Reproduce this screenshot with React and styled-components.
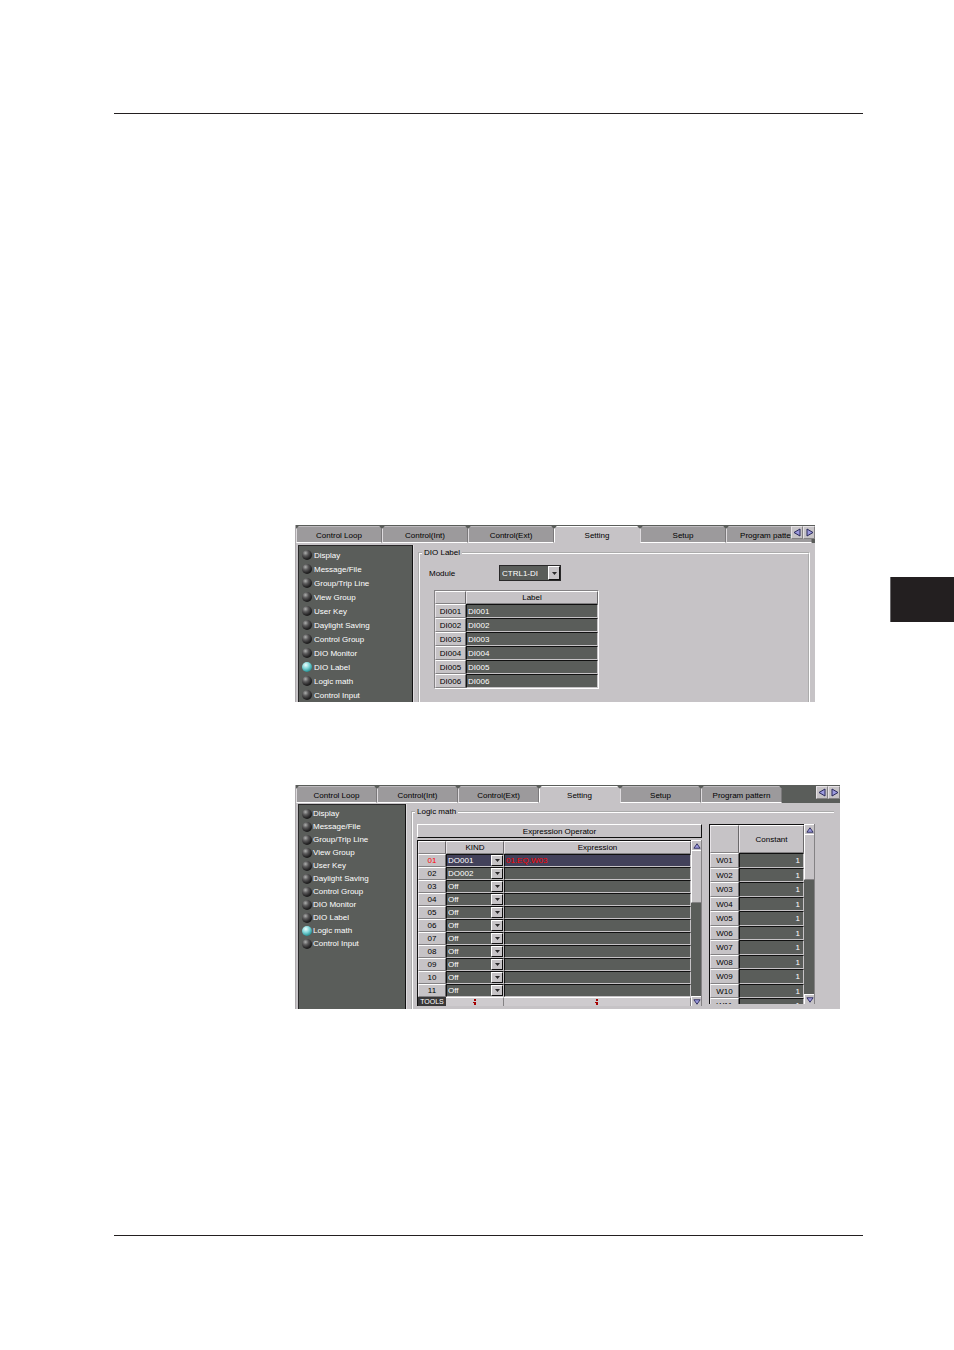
import { useState } from 'react';
import styled, { createGlobalStyle, css } from 'styled-components';

const GlobalStyle = createGlobalStyle`
  :root {
    --color-face: #c6c3c6;
    --color-panel: #5a5d5a;
    --color-tab: #9c9a9c;
    --color-shadow: #848284;
    --color-ink: #231f20;
    --color-selected: #42415a;
    --color-arrow: #9c9ade;
  }

  *,
  *::before,
  *::after {
    box-sizing: border-box;
  }

  body {
    margin: 0;
    background: #fff;
  }

  body,
  button,
  input,
  select {
    font-family: 'Liberation Sans', Arial, sans-serif;
    font-size: 8px;
    line-height: 11px;
  }

  button,
  input,
  select {
    margin: 0;
    padding: 0;
    border: 0;
    border-radius: 0;
    color: inherit;
    background: none;
    appearance: none;
    outline: none;
  }
`;

const Page = styled.div`
  display: flex;
  min-height: 1350px;
`;

const Sheet = styled.main`
  flex: 1;
  min-width: 0;
  display: flex;
  flex-direction: column;
  padding: 113px 0 114px 114px;
`;

const Rule = styled.hr`
  width: 100%;
  height: 1px;
  margin: 0;
  border: 0;
  background: var(--color-ink);
`;

const Figures = styled.div`
  flex: 1;
  display: flex;
  flex-direction: column;
  gap: 83px;
  padding: 411px 23px 0 181px;
`;

const Margin = styled.aside`
  width: 91px;
  padding: 577px 0 0 27px;
`;

const ChapterMark = styled.div`
  height: 45px;
  background: var(--color-ink);
  border-left: 1px solid #6b696b;
`;

const Window = styled.section`
  margin-right: ${(props) => props.$inset || 0}px;
  background: var(--color-face);
  border-left: 1px solid #adaaad;
  overflow: hidden;
`;

const TabStrip = styled.div`
  position: relative;
  display: flex;
  height: 18px;
  padding-top: 1px;
  background: var(--color-panel);
  overflow: hidden;
`;

const Tab = styled.button`
  flex: 0 0 ${(props) => props.$width}px;
  height: 17px;
  padding-top: 1px;
  color: #000;
  background: var(--color-tab);
  border-top: 1px solid #bdbabd;
  border-left: 1px solid #dedbde;
  border-right: 1px solid #7b797b;
  border-bottom: 1px solid #fff;
  clip-path: polygon(3px 0, calc(100% - 3px) 0, 100% 3px, 100% 100%, 0 100%, 0 3px);
  white-space: nowrap;

  ${(props) =>
    props.$active &&
    css`
      background: var(--color-face);
      border-top-color: #fff;
      border-left-color: #fff;
      border-right-color: var(--color-face);
      border-bottom-color: var(--color-face);
    `}
`;

const TabScroll = styled.div`
  position: absolute;
  top: 1px;
  right: 0;
  display: flex;
`;

const TabScrollButton = styled.button`
  display: grid;
  place-items: center;
  width: 12px;
  height: 13px;
  background: var(--color-face);
  border: 1px solid #e7e3e7;
  border-right-color: var(--color-shadow);
  border-bottom-color: var(--color-shadow);
`;

const Body = styled.div`
  display: flex;
  padding-top: ${(props) => props.$top}px;
`;

const Nav = styled.div`
  flex: 0 0 ${(props) => props.$width}px;
  margin: 0 5px 0 2px;
  padding: 2px 0 0 3px;
  color: #fff;
  background: var(--color-panel);
  border-top: 1px solid #292829;
  border-left: 1px solid #292829;
  border-right: 1px solid #101010;
  box-shadow: 1px 0 0 #dedbde;
`;

const NavItem = styled.label`
  display: flex;
  align-items: center;
  gap: ${(props) => props.$gap}px;
  height: ${(props) => props.$height}px;
  white-space: nowrap;
`;

const Lamp = styled.input`
  width: 10px;
  height: 10px;
  border-radius: 50%;
  background: radial-gradient(circle at 35% 30%, #adaead 0, #5a595a 30%, #292829 60%, #080808 90%);

  &:checked {
    background: radial-gradient(circle at 38% 30%, #efffff 0, #7bd3d6 40%, #319a9c 70%, #18494a 95%);
  }
`;

const Group = styled.fieldset`
  flex: 1;
  min-width: 0;
  margin: ${(props) => (props.$openRight ? '3px 6px 0 0' : '3px 5px 0 0')};
  padding: 0 0 0 2px;
  border: 2px groove #fff;
  border-bottom: 0;
  ${(props) => props.$openRight && 'border-right: 0;'}
`;

const Legend = styled.legend`
  height: 10px;
  padding: 0 2px;
  line-height: 10px;
`;

const FieldRow = styled.div`
  display: flex;
  align-items: center;
  padding: 7px 0 9px 7px;
`;

const FieldLabel = styled.label`
  width: 70px;
`;

const Picker = styled.div`
  position: relative;
  width: ${(props) => (props.$width ? `${props.$width}px` : '100%')};
  height: ${(props) => props.$height}px;
  color: #fff;
  border: ${(props) => (props.$framed ? '1px solid #292829' : '0')};
  background: ${(props) => (props.$framed ? 'var(--color-panel)' : 'none')};
`;

const PickerSelect = styled.select`
  display: block;
  width: 100%;
  height: 100%;
  padding-left: ${(props) => props.$pad}px;
  color: inherit;

  option {
    color: #000;
  }
`;

const PickerArrow = styled.span`
  position: absolute;
  top: 0;
  right: 0;
  display: grid;
  place-items: center;
  width: 12px;
  height: 100%;
  background: var(--color-face);
  border: 1px solid #fff;
  border-right-color: #101010;
  border-bottom-color: #101010;
  pointer-events: none;
`;

const Grid = styled.table`
  width: ${(props) => (props.$width ? `${props.$width}px` : '100%')};
  table-layout: fixed;
  border-collapse: separate;
  border-spacing: 0;
  border-top: 1px solid ${(props) => props.$edge || '#101010'};
  border-left: 1px solid ${(props) => props.$edge || '#101010'};
`;

const LabelGrid = styled(Grid)`
  margin-left: 12px;
  border-right: 1px solid #fff;
  border-bottom: 1px solid #fff;
`;

const Col = styled.col`
  width: ${(props) => props.$width}px;
`;

const HeadCell = styled.th`
  height: ${(props) => props.$height}px;
  padding: 0;
  font-weight: normal;
  color: ${(props) => (props.$current ? '#f00' : '#000')};
  background: var(--color-face);
  border-top: 1px solid #fff;
  border-left: 1px solid #e7e3e7;
  border-right: 1px solid #6b696b;
  border-bottom: 1px solid var(--color-shadow);
  line-height: 11px;
`;

const DataCell = styled.td`
  padding: 0;
  height: ${(props) => props.$height}px;
  color: #fff;
  background: ${(props) => (props.$current ? 'var(--color-selected)' : 'var(--color-panel)')};
  border-top: 1px solid #101010;
  border-left: 1px solid #101010;
  border-right: 1px solid var(--color-face);
  border-bottom: 1px solid var(--color-face);
`;

const CellInput = styled.input`
  display: block;
  width: 100%;
  height: ${(props) => props.$height}px;
  padding: 0 ${(props) => (props.$align === 'right' ? 3 : 1)}px;
  text-align: ${(props) => props.$align || 'left'};
  color: ${(props) => (props.$red ? '#f00' : 'inherit')};
`;

const Panes = styled.div`
  display: flex;
  align-items: flex-start;
  gap: 7px;
  padding: 7px 19px 3px 2px;
`;

const ExpressionPane = styled.div`
  flex: 1;
  min-width: 0;
`;

const OperatorButton = styled.button`
  display: block;
  width: 100%;
  height: 14px;
  margin-bottom: 2px;
  color: #000;
  border: 1px solid #fff;
  border-right-color: #101010;
  border-bottom-color: #101010;
`;

const ScrollArea = styled.div`
  display: flex;
`;

const ConstantPane = styled(ScrollArea)`
  width: 106px;
  height: 180px;
  overflow: hidden;
`;

const ToolsCell = styled.th`
  height: 9px;
  padding: 0;
  font-size: 7px;
  font-weight: normal;
  line-height: 7px;
  color: #fff;
  background: #393839;
`;

const MarkerCell = styled.td`
  height: 9px;
  padding: 0;
  line-height: 0;
  text-align: center;
  background: #cecbce;
  border-top: 1px solid #fff;
  border-right: 1px solid var(--color-shadow);
`;

const ScrollBar = styled.div`
  flex: 0 0 11px;
  display: flex;
  flex-direction: column;
  background: var(--color-panel);
  border-right: 1px solid var(--color-shadow);
`;

const ScrollButton = styled.button`
  display: grid;
  place-items: center;
  height: 10px;
  background: var(--color-face);
  border-top: 1px solid #fff;
  border-left: 1px solid #fff;
`;

const ScrollThumb = styled.div`
  height: ${(props) => props.$height}px;
  margin-bottom: auto;
  background: var(--color-face);
  border-top: 1px solid #fff;
  border-left: 1px solid #fff;
  border-bottom: 1px solid var(--color-shadow);
`;

const tabs = ['Control Loop', 'Control(Int)', 'Control(Ext)', 'Setting', 'Setup', 'Program pattern'];

const navItems = [
  'Display',
  'Message/File',
  'Group/Trip Line',
  'View Group',
  'User Key',
  'Daylight Saving',
  'Control Group',
  'DIO Monitor',
  'DIO Label',
  'Logic math',
  'Control Input',
];

const labels = ['DI001', 'DI002', 'DI003', 'DI004', 'DI005', 'DI006'];

const expressions = [
  { id: '01', kind: 'DO001', text: '01.EQ.W03' },
  { id: '02', kind: 'DO002', text: '' },
  ...['03', '04', '05', '06', '07', '08', '09', '10', '11'].map((id) => ({ id, kind: 'Off', text: '' })),
];

const constants = ['W01', 'W02', 'W03', 'W04', 'W05', 'W06', 'W07', 'W08', 'W09', 'W10', 'W11'];

const arrowPoints = {
  left: '7,1 7,8 1,4.5',
  right: '2,1 2,8 8,4.5',
  up: '4.5,2 8,7 1,7',
  down: '1,2 8,2 4.5,7',
};

function Arrow({ to, size = 9 }) {
  return (
    <svg width={size} height={size} viewBox="0 0 9 9" aria-hidden="true">
      <polygon points={arrowPoints[to]} fill="var(--color-arrow)" stroke="#29285a" strokeWidth="1" />
    </svg>
  );
}

function Marker() {
  return (
    <svg width="4" height="6" viewBox="0 0 4 6" aria-hidden="true">
      <path d="M1 0h2v2H1zM0 3h3v1H0zM1 3h2v3H1z" fill="#a50000" />
    </svg>
  );
}

function TabBar({ width }) {
  const [active, setActive] = useState('Setting');

  return (
    <TabStrip role="tablist">
      {tabs.map((tab) => (
        <Tab
          key={tab}
          role="tab"
          aria-selected={tab === active}
          $active={tab === active}
          $width={width}
          onClick={() => setActive(tab)}
        >
          {tab}
        </Tab>
      ))}
      <TabScroll>
        <TabScrollButton aria-label="Previous tabs"><Arrow to="left" /></TabScrollButton>
        <TabScrollButton aria-label="Next tabs"><Arrow to="right" /></TabScrollButton>
      </TabScroll>
    </TabStrip>
  );
}

function SideNav({ name, current, width, height, gap }) {
  return (
    <Nav $width={width}>
      {navItems.map((item) => (
        <NavItem key={item} $height={height} $gap={gap}>
          <Lamp type="radio" name={name} defaultChecked={item === current} />
          {item}
        </NavItem>
      ))}
    </Nav>
  );
}

function Dropdown({ id, label, value, options, width, height, pad, framed }) {
  return (
    <Picker $width={width} $height={height} $framed={framed}>
      <PickerSelect id={id} aria-label={label} defaultValue={value} $pad={pad}>
        {options.map((option) => (
          <option key={option}>{option}</option>
        ))}
      </PickerSelect>
      <PickerArrow>
        <svg width="5" height="3" viewBox="0 0 5 3" aria-hidden="true">
          <path d="M0 0h5L2.5 3z" fill="#292829" />
        </svg>
      </PickerArrow>
    </Picker>
  );
}

function VerticalScroll({ thumb }) {
  return (
    <ScrollBar>
      <ScrollButton aria-label="Scroll up"><Arrow to="up" size={8} /></ScrollButton>
      <ScrollThumb $height={thumb} />
      <ScrollButton aria-label="Scroll down"><Arrow to="down" size={8} /></ScrollButton>
    </ScrollBar>
  );
}

function DioLabelWindow() {
  return (
    <Window $inset={25}>
      <TabBar width={86} />
      <Body $top={2}>
        <SideNav name="dio-nav" current="DIO Label" width={115} height={14} gap={2} />
        <Group>
          <Legend>DIO Label</Legend>
          <FieldRow>
            <FieldLabel htmlFor="module">Module</FieldLabel>
            <Dropdown id="module" value="CTRL1-DI" options={['CTRL1-DI']} width={62} height={16} pad={2} framed />
          </FieldRow>
          <LabelGrid $width={165} $edge="#848284">
            <colgroup>
              <Col $width={31} />
              <col />
            </colgroup>
            <thead>
              <tr>
                <HeadCell $height={13} />
                <HeadCell $height={13}>Label</HeadCell>
              </tr>
            </thead>
            <tbody>
              {labels.map((label) => (
                <tr key={label}>
                  <HeadCell $height={14} scope="row">{label}</HeadCell>
                  <DataCell $height={14}>
                    <CellInput aria-label={`${label} label`} defaultValue={label} $height={12} />
                  </DataCell>
                </tr>
              ))}
            </tbody>
          </LabelGrid>
        </Group>
      </Body>
    </Window>
  );
}

function ExpressionTable() {
  return (
    <Grid>
      <colgroup>
        <Col $width={28} />
        <Col $width={58} />
        <col />
      </colgroup>
      <thead>
        <tr>
          <HeadCell $height={13} />
          <HeadCell $height={13}>KIND</HeadCell>
          <HeadCell $height={13}>Expression</HeadCell>
        </tr>
      </thead>
      <tbody>
        {expressions.map((row, index) => (
          <tr key={row.id}>
            <HeadCell $height={13} $current={index === 0} scope="row">{row.id}</HeadCell>
            <DataCell $height={13} $current={index === 0}>
              <Dropdown
                label={`Kind ${row.id}`}
                value={row.kind}
                options={['Off', 'DO001', 'DO002']}
                height={11}
                pad={1}
              />
            </DataCell>
            <DataCell $height={13} $current={index === 0}>
              <CellInput aria-label={`Expression ${row.id}`} defaultValue={row.text} $height={11} $red={index === 0} />
            </DataCell>
          </tr>
        ))}
      </tbody>
      <tfoot>
        <tr>
          <ToolsCell>TOOLS</ToolsCell>
          <MarkerCell><Marker /></MarkerCell>
          <MarkerCell><Marker /></MarkerCell>
        </tr>
      </tfoot>
    </Grid>
  );
}

function ConstantTable() {
  return (
    <Grid>
      <colgroup>
        <Col $width={29} />
        <col />
      </colgroup>
      <thead>
        <tr>
          <HeadCell $height={28} />
          <HeadCell $height={28}>Constant</HeadCell>
        </tr>
      </thead>
      <tbody>
        {constants.map((name, index) => {
          // rows alternate between 15 and 14 pixels
          const height = index % 2 ? 14 : 15;
          return (
            <tr key={name}>
              <HeadCell $height={height} scope="row">{name}</HeadCell>
              <DataCell $height={height}>
                <CellInput aria-label={`Constant ${name}`} defaultValue="1" $height={height - 2} $align="right" />
              </DataCell>
            </tr>
          );
        })}
      </tbody>
    </Grid>
  );
}

function LogicMathWindow() {
  return (
    <Window>
      <TabBar width={81} />
      <Body $top={1}>
        <SideNav name="logic-nav" current="Logic math" width={108} height={13} gap={1} />
        <Group $openRight>
          <Legend>Logic math</Legend>
          <Panes>
            <ExpressionPane>
              <OperatorButton>Expression Operator</OperatorButton>
              <ScrollArea>
                <ExpressionTable />
                <VerticalScroll thumb={53} />
              </ScrollArea>
            </ExpressionPane>
            <ConstantPane>
              <ConstantTable />
              <VerticalScroll thumb={46} />
            </ConstantPane>
          </Panes>
        </Group>
      </Body>
    </Window>
  );
}

function App() {
  return (
    <>
      <GlobalStyle />
      <Page>
        <Sheet>
          <Rule />
          <Figures>
            <DioLabelWindow />
            <LogicMathWindow />
          </Figures>
          <Rule />
        </Sheet>
        <Margin>
          <ChapterMark />
        </Margin>
      </Page>
    </>
  );
}

export default App;
